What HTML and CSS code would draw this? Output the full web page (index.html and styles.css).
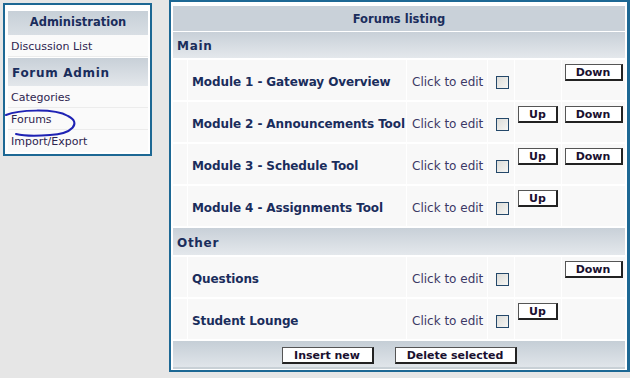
FILE: index.html
```html
<!DOCTYPE html>
<html>
<head>
<meta charset="utf-8">
<link rel="stylesheet" href="styles.css">
</head>
<body>
<div class="page">
  <div class="side">
    <div class="side-head">Administration</div>
    <div class="side-item">Discussion List</div>
    <div class="side-head big">Forum Admin</div>
    <div class="side-item">Categories</div>
    <div class="side-item">Forums</div>
    <div class="side-item last">Import/Export</div>
    <svg class="circle" width="84" height="40" viewBox="0 0 84 40">
      <path d="M4 11 C 16 6, 52 4, 66 12 C 80 19, 70 30, 48 31 C 36 32, 22 32, 14 30" fill="none" stroke="#1e22b4" stroke-width="2" stroke-linecap="round"/>
    </svg>
  </div>
  <div class="main">
    <table class="grid">
      <colgroup>
        <col class="w-ind"><col class="w-name"><col class="w-edit"><col class="w-chk"><col class="w-up"><col class="w-dn">
      </colgroup>
      <tr class="r-head"><th colspan="6">Forums listing</th></tr>
      <tr class="r-sec"><td colspan="6">Main</td></tr>
      <tr class="r-item">
        <td></td><td class="c-name">Module 1 - Gateway Overview</td><td class="c-edit">Click to edit</td>
        <td><input type="checkbox" class="chk"></td><td class="c-btn"></td><td class="c-btn"><button class="btn dn">Down</button></td>
      </tr>
      <tr class="r-item">
        <td></td><td class="c-name">Module 2 - Announcements Tool</td><td class="c-edit">Click to edit</td>
        <td><input type="checkbox" class="chk"></td><td class="c-btn"><button class="btn up">Up</button></td><td class="c-btn"><button class="btn dn">Down</button></td>
      </tr>
      <tr class="r-item">
        <td></td><td class="c-name">Module 3 - Schedule Tool</td><td class="c-edit">Click to edit</td>
        <td><input type="checkbox" class="chk"></td><td class="c-btn"><button class="btn up">Up</button></td><td class="c-btn"><button class="btn dn">Down</button></td>
      </tr>
      <tr class="r-item">
        <td></td><td class="c-name">Module 4 - Assignments Tool</td><td class="c-edit">Click to edit</td>
        <td><input type="checkbox" class="chk"></td><td class="c-btn"><button class="btn up">Up</button></td><td class="c-btn"></td>
      </tr>
      <tr class="r-sec r-sec2"><td colspan="6">Other</td></tr>
      <tr class="r-item">
        <td></td><td class="c-name">Questions</td><td class="c-edit">Click to edit</td>
        <td><input type="checkbox" class="chk"></td><td class="c-btn"></td><td class="c-btn"><button class="btn dn">Down</button></td>
      </tr>
      <tr class="r-item">
        <td></td><td class="c-name">Student Lounge</td><td class="c-edit">Click to edit</td>
        <td><input type="checkbox" class="chk"></td><td class="c-btn"><button class="btn up">Up</button></td><td class="c-btn"></td>
      </tr>
      <tr class="r-foot"><td colspan="6"><div class="foot"><button class="btn wide">Insert new</button><button class="btn wide2">Delete selected</button></div></td></tr>
    </table>
  </div>
</div>
</body>
</html>
```

FILE: styles.css
```css
html, body {
  margin: 0;
  padding: 0;
  background: #e6e6e6;
  font-family: "DejaVu Sans", Verdana, sans-serif;
}
.page {
  display: flex;
  align-items: flex-start;
  width: 630px;
  height: 378px;
}
.side {
  position: relative;
  margin: 3px 0 0 3px;
  width: 140px;
  border: 2px solid #1d6894;
  background: #ffffff;
  padding: 6px 2px 2px 3px;
}
.side-head {
  height: 24px;
  line-height: 22px;
  text-align: center;
  font-weight: bold;
  font-size: 11.5px;
  color: #1a2d5c;
  background: linear-gradient(#c7d0d8, #d8dee4);
}
.side-head.big {
  height: 28px;
  line-height: 30px;
  margin-top: 1px;
  text-align: left;
  padding-left: 4px;
  font-size: 12px;
  letter-spacing: 0.7px;
  background: linear-gradient(#c8d0d8, #e3e7eb);
}
.side-item {
  height: 21px;
  line-height: 24px;
  font-size: 11px;
  color: #2e2550;
  padding-left: 3px;
  background: #fafafa;
  border-bottom: 1px solid #ececec;
}
.side-item.last { border-bottom: none; height: 22px; }
.circle {
  position: absolute;
  left: -3px;
  top: 99px;
}
.main {
  margin-left: 17px;
  width: 453px;
  height: 364px;
  border: 2px solid #1d6894;
  border-right-width: 3px;
  background: #ffffff;
  padding: 4px 1px 0 2px;
}
.grid {
  width: 452px;
  table-layout: fixed;
  border-collapse: separate;
  border-spacing: 0;
}
.w-ind { width: 15px; }
.w-name { width: 219px; }
.w-edit { width: 81px; }
.w-chk { width: 27px; }
.w-up { width: 47px; }
.w-dn { width: 63px; }
.grid th, .grid td {
  box-sizing: border-box;
  padding: 0;
}
.r-head th {
  height: 26px;
  font-size: 11.5px;
  font-weight: bold;
  color: #1a2d5c;
  background: #c9d1d9;
  border-bottom: 1px solid #fff;
}
.r-sec td {
  height: 28px;
  padding: 2px 0 0 4px;
  font-size: 12px;
  font-weight: bold;
  letter-spacing: 0.7px;
  color: #1a2d5c;
  background: linear-gradient(#c8d0d8, #e4e8ec);
  border-bottom: 2px solid #fff;
}
.r-sec2 td { height: 29px; }
.r-item td {
  height: 42px;
  background: #f8f8f8;
  border-right: 1px solid #fff;
  border-bottom: 2px solid #fff;
  vertical-align: middle;
}
.r-item td:last-child { border-right: none; }
.grid .c-name {
  padding: 3px 0 0 4px;
  white-space: nowrap;
  font-size: 12px;
  letter-spacing: -0.1px;
  font-weight: bold;
  color: #1a2d5c;
}
.grid .c-edit {
  padding: 3px 0 0 5px;
  white-space: nowrap;
  font-size: 12px;
  color: #3c3866;
}
.r-item td.c-btn { vertical-align: top; }
.chk {
  appearance: none;
  -webkit-appearance: none;
  display: block;
  width: 13px;
  height: 13px;
  margin: 5px 0 0 8px;
  border: 1px solid #24486a;
  background: linear-gradient(135deg, #dcdcd8, #f6f6f4);
}
.btn {
  display: block;
  font-family: "DejaVu Sans", Verdana, sans-serif;
  font-size: 11px;
  font-weight: bold;
  color: #1a1030;
  background: #ffffff;
  border: 1px solid #555;
  border-right: 2px solid #222;
  border-bottom: 2px solid #222;
  padding: 0;
  height: 17px;
  line-height: 13px;
  margin: 4px auto 0;
}
.btn.dn { width: 58px; }
.btn.up { width: 40px; }
.r-foot td {
  height: 28px;
  background: linear-gradient(#c5ced6, #e0e5ea);
  border-bottom: 2px solid #c8d0d6;
  vertical-align: top;
}
.foot {
  display: flex;
  justify-content: center;
  gap: 21px;
}
.foot .btn { margin: 6px 0 0; }
.btn.wide { width: 92px; }
.btn.wide2 { width: 122px; }
```
